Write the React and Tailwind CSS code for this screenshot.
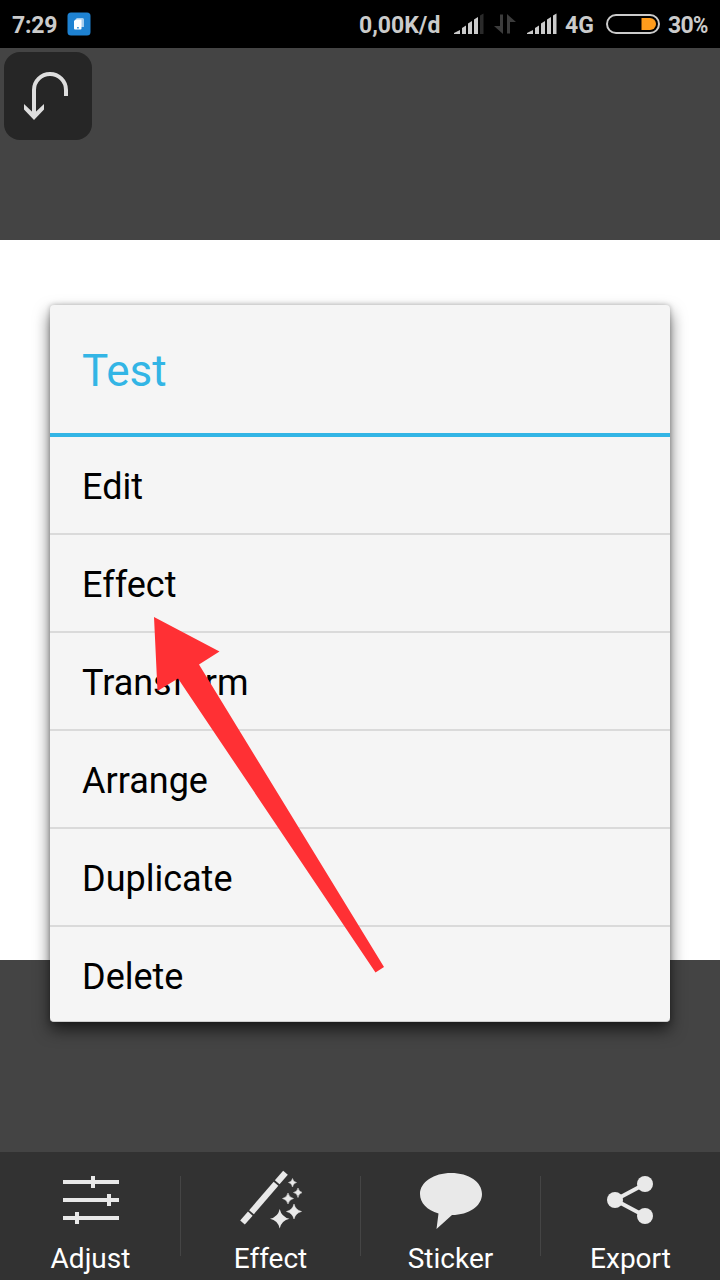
const menuItems = ["Edit", "Effect", "Transform", "Arrange", "Duplicate", "Delete"];

function Signal({ full }) {
  return (
    <svg width="30" height="22" viewBox="0 0 30 22" fill="#cbcbcb">
      <path d="M0 21 V20 L6 17 V21 Z" />
      <path d="M8 21 V15 L12 12.5 V21 Z" />
      <path d="M14 21 V10.5 L18 8 V21 Z" />
      <path d="M20 21 V6.5 L24 4 V21 Z" />
      <path
        d="M26 21 V2.5 L29.5 0.5 V21 Z"
        fill={full ? "#cbcbcb" : "#2a2a2a"}
      />
    </svg>
  );
}

function StatusBar() {
  return (
    <header className="flex h-12 items-center bg-black pl-3 pr-3 text-[23px] font-bold leading-none text-[#cbcbcb]">
      <span className="w-[55px] pt-0.5 tracking-[-0.2px]">7:29</span>
      <svg width="24" height="24" viewBox="0 0 24 24">
        <rect x="0.500" y="0.500" width="23" height="23" rx="3.500" fill="#1e82d2" />
        <path d="M9.500 6 H15.500 Q17 6 17 7.500 V15 H14 V8 H9 Z" fill="#a5cdee" />
        <path d="M8.500 7.500 H14.500 V16.500 Q14.500 17.500 13.500 17.500 H8 Q7 17.500 7 16.500 V9 Z" fill="#fff" />
        <rect x="10.200" y="15" width="1.500" height="1.500" fill="#1e82d2" />
      </svg>

      <div className="ml-auto flex items-center">
        <span className="w-[95px] whitespace-nowrap pt-0.5">0,00K/d</span>
        <Signal />
        <svg className="ml-2.5" width="22" height="22" viewBox="0 0 22 22" fill="#3c3c3c">
          <path d="M6 1.500 H9 V21 L0 13 H6 Z" />
          <path d="M13 1 L22 9 H16 V20.500 H13 Z" />
        </svg>
        <span className="ml-[11px]">
          <Signal full />
        </span>
        <span className="ml-2 w-[41px] pt-0.5">4G</span>
        <svg width="54" height="20" viewBox="0 0 54 20">
          <rect x="1" y="1" width="52" height="18" rx="9" fill="none" stroke="#cbcbcb" strokeWidth="2" />
          <path d="M35.500 4 H44 A6 6 0 0 1 44 16 H35.500 Z" fill="#ff9c1c" />
        </svg>
        <span className="ml-2 w-10 whitespace-nowrap pt-0.5 tracking-[-0.6px]">
          30<span className="inline-block origin-left scale-x-90">%</span>
        </span>
      </div>
    </header>
  );
}

function UndoButton() {
  return (
    <button className="flex h-[88px] w-[88px] rounded-2xl bg-[#262626]">
      <svg width="88" height="88" viewBox="0 0 88 88">
        <path d="M30 64 V38 A16 16 0 0 1 62 38 V44" fill="none" stroke="#dedede" strokeWidth="4" />
        <path d="M20 52 L30 61.500 L40 52 V57.500 L30 68 L20 57.500 Z" fill="#dedede" />
      </svg>
    </button>
  );
}

function AdjustIcon() {
  return (
    <svg width="64" height="64" viewBox="0 0 64 64" fill="#e9e9e9">
      <path d="M5 12 H61 V16 H5 Z M33 8 H37 V20 H33 Z" />
      <path d="M5 30 H61 V34 H5 Z M49 26 H53 V38 H49 Z" />
      <path d="M5 48 H61 V52 H5 Z M17 44 H21 V56 H17 Z" />
    </svg>
  );
}

function EffectIcon() {
  return (
    <svg width="64" height="64" viewBox="0 0 64 64" fill="#e9e9e9">
      <g stroke="#e9e9e9" strokeWidth="6.200">
        <path d="M4.500 54.500 L12.300 45.600" />
        <path d="M13.500 44.200 L38 15.700" />
        <path d="M39.200 14.300 L47.500 4.700" />
      </g>
      <path d="M54.500 10.500 Q55.200 13.800 58.500 14.500 Q55.200 15.200 54.500 19 Q53.800 15.200 50.500 14.500 Q53.800 13.800 54.500 10.500 Z" stroke="#e9e9e9" strokeWidth="0.500" />
      <path d="M60 20 Q60.700 23.800 64.500 24.500 Q60.700 25.200 60 29.500 Q59.300 25.200 55.500 24.500 Q59.300 23.800 60 20 Z" stroke="#e9e9e9" strokeWidth="0.500" />
      <path d="M50 25 Q51 29.500 55.500 30.500 Q51 31.500 50 36 Q49 31.500 44.500 30.500 Q49 29.500 50 25 Z" stroke="#e9e9e9" strokeWidth="0.500" />
      <path d="M56 36 Q57.500 42 63.500 43.500 Q57.500 45 56 51 Q54.500 45 48.500 43.500 Q54.500 42 56 36 Z" stroke="#e9e9e9" strokeWidth="0.500" />
      <path d="M41.700 41 Q43.500 49 51.500 50.800 Q43.500 52.500 41.700 60.500 Q40 52.500 32 50.800 Q40 49 41.700 41 Z" />
    </svg>
  );
}

function StickerIcon() {
  return (
    <svg width="64" height="64" viewBox="0 0 64 64" fill="#e9e9e9">
      <path d="M33 5 C51 5 64 14 64 26 C64 38 51 47 34 47 L18.500 61 L20.500 45.500 C9 42 2 35 2 26 C2 14 16 5 33 5 Z" />
    </svg>
  );
}

function ExportIcon() {
  return (
    <svg width="64" height="64" viewBox="0 0 64 64" fill="#e9e9e9">
      <path d="M47 16 L17 32 L47 48" fill="none" stroke="#e9e9e9" strokeWidth="4" />
      <circle cx="47" cy="16" r="8" />
      <circle cx="17" cy="32" r="8" />
      <circle cx="47" cy="48" r="8" />
    </svg>
  );
}

const tools = [
  { label: "Adjust", Icon: AdjustIcon },
  { label: "Effect", Icon: EffectIcon },
  { label: "Sticker", Icon: StickerIcon },
  { label: "Export", Icon: ExportIcon },
];

function Toolbar() {
  return (
    <nav className="flex h-32 bg-[#323232] text-white">
      {tools.map(({ label, Icon }, i) => (
        <button key={label} className="flex flex-1">
          <span
            className={
              i === 0
                ? "mt-6 h-20 w-px"
                : "mt-6 h-20 w-px bg-[#454545]"
            }
          />
          <span className="-ml-px flex flex-1 flex-col items-center pt-4">
            <Icon />
            <span className="mt-[11px] pl-px text-[28px] leading-8">{label}</span>
          </span>
        </button>
      ))}
    </nav>
  );
}

function LayerDialog() {
  return (
    <div className="absolute left-[50px] top-[305px] w-[620px] rounded-[4px] border-b border-[#cfcfcf] bg-[#f5f5f5] shadow-[0_8px_16px_rgba(0,0,0,0.6),0_0_5px_rgba(0,0,0,0.25)]">
      <h2 className="flex h-32 items-center px-8 pt-1 text-[44px] text-[#33b5e5]">
        Test
      </h2>
      <ul className="divide-y-2 divide-[#dadada] border-t-4 border-[#33b5e5] text-4xl text-black">
        {menuItems.map((item) => (
          <li key={item} className="flex h-[98px] items-center px-8 pt-1 last:h-[94px] last:pt-1.5">
            {item}
          </li>
        ))}
      </ul>
    </div>
  );
}

export default function App() {
  return (
    <div className="relative flex h-[1280px] w-[720px] flex-col overflow-hidden font-['Roboto',sans-serif]">
      <StatusBar />
      <main className="flex flex-1 flex-col bg-[#444444]">
        <div className="h-48 p-1">
          <UndoButton />
        </div>
        <div className="h-[720px] bg-white" />
      </main>
      <Toolbar />

      <LayerDialog />

      {/* Arrow pointing at the Effect entry */}
      <svg
        className="pointer-events-none absolute left-[150px] top-[610px]"
        width="240"
        height="370"
        viewBox="150 610 240 370"
      >
        <path
          d="M154 617 L219.500 651.500 L199 664.500 L384 967 L375.500 972.500 L178 678.500 L157.500 691 Z"
          fill="#ff3034"
        />
      </svg>
    </div>
  );
}
